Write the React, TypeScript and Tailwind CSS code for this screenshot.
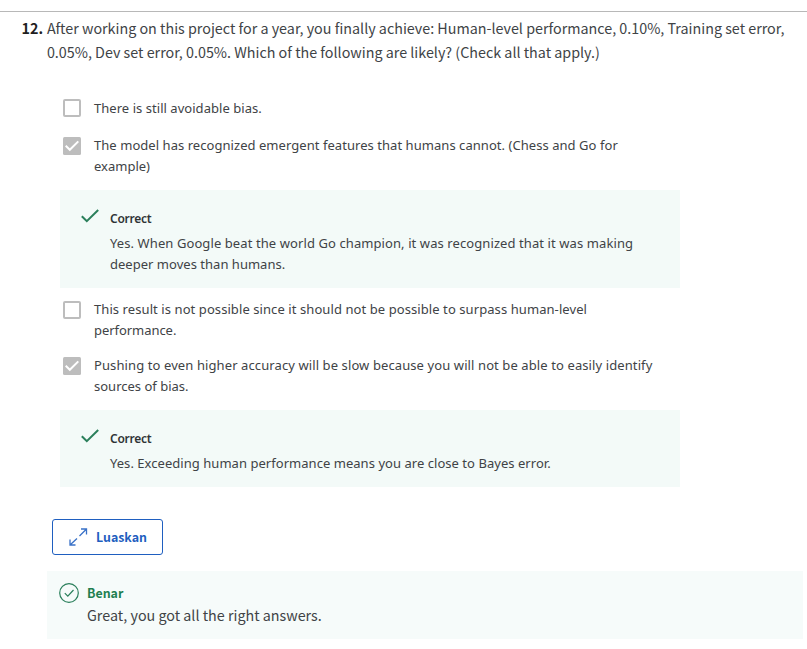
import type { ReactNode } from "react";

const body = "font-['Noto_Sans',sans-serif] text-[13px] leading-[21px] text-[#404346]";
const source = "font-['Noto_Sans_CJK_SC',sans-serif]";

function Option({ checked = false, boxMargin = "mt-[2px]", children }: { checked?: boolean; boxMargin?: string; children: ReactNode }) {
  return (
    <div className="flex items-start">
      <svg className={boxMargin + " mr-[13px] shrink-0"} width="18" height="18" viewBox="0 0 18 18" fill="none">
        {checked ? (
          <>
            <rect width="18" height="18" rx="1.5" fill="#bdbdbd" />
            <path d="M2.7 8.8 6.8 12.8 15.3 4.4" stroke="#fff" strokeWidth="2" />
          </>
        ) : (
          <rect x="1" y="1" width="16" height="16" rx="1" stroke="#bdbdbd" strokeWidth="2" />
        )}
      </svg>
      <div className={body}>{children}</div>
    </div>
  );
}

function Feedback({ children }: { children: ReactNode }) {
  return (
    <div className="-ml-[3px] flex w-[620px] items-start bg-[#f3faf8] pt-[18px] pb-[13px] pl-[21px]">
      <svg className="mr-[11px] shrink-0" width="18" height="16" viewBox="0 0 18 16" fill="none">
        <path d="M.8 8.2 5.8 13.2 17.2 2" stroke="#2a7f5b" strokeWidth="2" />
      </svg>
      <div>
        <div className="font-['Noto_Sans',sans-serif] text-[12px] leading-[21px] font-semibold tracking-[-0.25px] text-[#2f3436]">Correct</div>
        <div className={body + " mt-1"}>{children}</div>
      </div>
    </div>
  );
}

export default function App() {
  return (
    <main className="h-[649px] w-full overflow-hidden bg-white pt-[11px]">
      <div className="border-t border-[#b8b8b8]" />
      <div className={source + " mt-[4px] flex pl-[21.5px] text-[14.32px] leading-[24px] whitespace-nowrap text-[#404346]"}>
        <b className="w-[25.4px] text-[#1f1f1f]">12.</b>
        <p>
          After working on this project for a year, you finally achieve: Human-level performance, 0.10%, Training set error,
          <br />
          0.05%, Dev set error, 0.05%. Which of the following are likely? (Check all that apply.)
        </p>
      </div>

      <div className="mt-[34px] flex flex-col pl-[63px] whitespace-nowrap">
        <Option boxMargin="mt-px">
          <span className="tracking-[0.04px]">There is still avoidable bias.</span>
        </Option>
        <div className="h-4" />
        <Option checked>
          <span className="tracking-[0.05px]">The model has recognized emergent features that humans cannot. (Chess and Go for</span>
          <br />
          <span>example)</span>
        </Option>
        <div className="h-[13px]" />
        <Feedback>
          <span className="tracking-[0.09px]">Yes. When Google beat the world Go champion, it was recognized that it was making</span>
          <br />
          <span className="tracking-[0.02px]">deeper moves than humans.</span>
        </Feedback>
        <div className="h-[11px]" />
        <Option>
          <span className="tracking-[0.08px]">This result is not possible since it should not be possible to surpass human-level</span>
          <br />
          <span className="tracking-[-0.05px]">performance.</span>
        </Option>
        <div className="h-[14px]" />
        <Option checked>
          <span className="tracking-[0.1px]">Pushing to even higher accuracy will be slow because you will not be able to easily identify</span>
          <br />
          <span>sources of bias.</span>
        </Option>
        <div className="h-[13px]" />
        <Feedback>
          <span className="tracking-[0.04px]">Yes. Exceeding human performance means you are close to Bayes error.</span>
        </Feedback>
      </div>

      <button className={source + " mt-[32px] ml-[52px] flex h-[36px] w-[111px] items-center rounded-[3px] border border-[#1f5fc0] pl-[16px] text-[12.4px] font-bold text-[#1f5fc0]"}>
        <svg className="mr-[8px]" width="19" height="18" viewBox="0 0 19 18" fill="none" stroke="#3a72c8" strokeWidth="1.3">
          <path d="M10.5 8 17.5 1M12 1h5.5v5.5M8 10.5 1 17M1 11.5V17h5.5" />
        </svg>
        Luaskan
      </button>

      <section className={source + " mt-[16px] ml-[47px] flex h-[68px] w-[756px] bg-[#f6fbfa] pt-[12px] pl-[12px]"}>
        <svg className="mr-[8px] shrink-0" width="20" height="20" viewBox="0 0 20 20" fill="none" stroke="#2a7f5b" strokeWidth="1.2">
          <circle cx="10" cy="10" r="9.3" />
          <path d="m5.8 10.2 3 3 5.7-6.2" />
        </svg>
        <div>
          <div className="text-[12.4px] leading-[21px] font-bold text-[#1f7f50]">Benar</div>
          <div className="-mt-px text-[14.32px] leading-[24px] text-[#404346]">Great, you got all the right answers.</div>
        </div>
      </section>
    </main>
  );
}
